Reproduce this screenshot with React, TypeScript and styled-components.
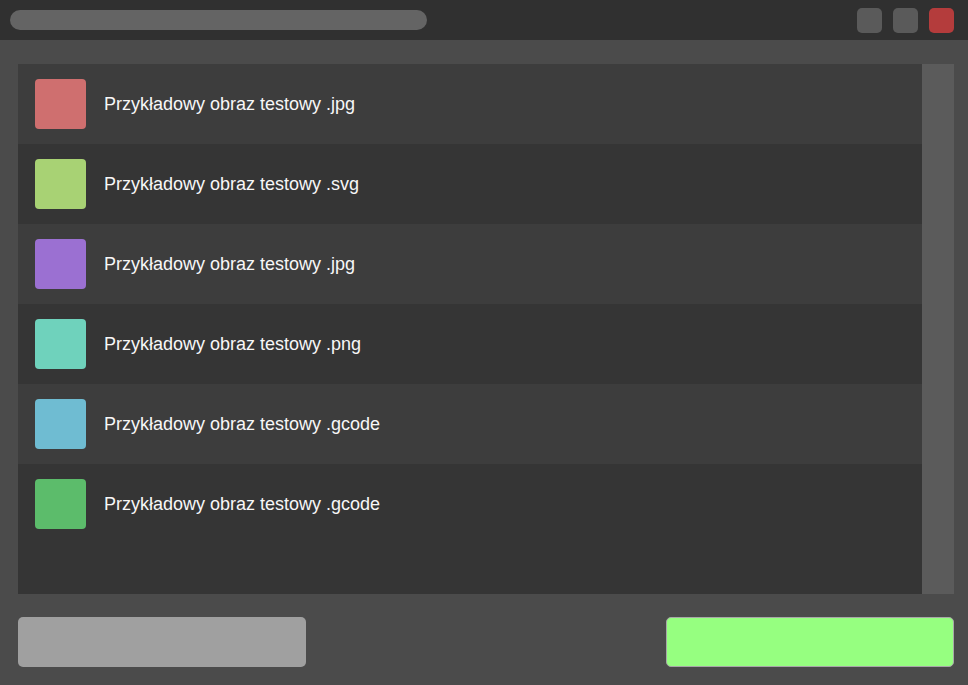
import React from "react";
import styled, { createGlobalStyle } from "styled-components";

const Global = createGlobalStyle`
  html, body { margin: 0; padding: 0; background: #4b4b4b; }
  body { font-family: "Liberation Sans", Arial, sans-serif; }
  * { box-sizing: border-box; }
`;

const Window = styled.div`
  width: 968px;
  height: 685px;
  display: flex;
  flex-direction: column;
  background: #4b4b4b;
`;

const TitleBar = styled.div`
  height: 40px;
  flex: none;
  background: #303030;
  display: flex;
  align-items: center;
  padding: 0 14px 0 10px;
`;

const TitlePill = styled.div`
  width: 417px;
  height: 20px;
  border-radius: 10px;
  background: #646464;
`;

const Controls = styled.div`
  margin-left: auto;
  display: flex;
  gap: 11px;
  margin-top: 1px;
`;

const ControlButton = styled.div<{ $close?: boolean }>`
  width: 25px;
  height: 25px;
  border-radius: 5px;
  background: ${(p) => (p.$close ? "#b43c3c" : "#5a5a5a")};
`;

const Body = styled.div`
  flex: 1;
  display: flex;
  flex-direction: column;
  padding: 24px 14px 18px 18px;
`;

const ListFrame = styled.div`
  height: 530px;
  display: flex;
`;

const List = styled.div`
  flex: 1;
  background: #353535;
  display: flex;
  flex-direction: column;
`;

const Scrollbar = styled.div`
  width: 32px;
  background: #5b5b5b;
`;

const Row = styled.div<{ $alt: boolean }>`
  height: 80px;
  flex: none;
  display: flex;
  align-items: center;
  padding-left: 17px;
  gap: 18px;
  background: ${(p) => (p.$alt ? "#3d3d3d" : "#353535")};
`;

const Swatch = styled.div<{ $color: string }>`
  width: 51px;
  height: 50px;
  border-radius: 4px;
  background: ${(p) => p.$color};
`;

const Label = styled.span`
  color: #f7f7f7;
  font-size: 18px;
  line-height: 20px;
`;

const Footer = styled.div`
  margin-top: 23px;
  display: flex;
  justify-content: space-between;
`;

const FooterButton = styled.div<{ $primary?: boolean }>`
  width: 288px;
  height: 50px;
  border-radius: 5px;
  background: ${(p) => (p.$primary ? "#96ff80" : "#a0a0a0")};
  border: ${(p) => (p.$primary ? "1px solid #a8a8a8" : "none")};
`;

const items = [
  { color: "#cf6f6f", name: "Przykładowy obraz testowy .jpg" },
  { color: "#a8d274", name: "Przykładowy obraz testowy .svg" },
  { color: "#9b70d2", name: "Przykładowy obraz testowy .jpg" },
  { color: "#6fd2bc", name: "Przykładowy obraz testowy .png" },
  { color: "#6fbcd2", name: "Przykładowy obraz testowy .gcode" },
  { color: "#5cbc6b", name: "Przykładowy obraz testowy .gcode" },
];

export default function App() {
  return (
    <>
      <Global />
      <Window>
        <TitleBar>
          <TitlePill />
          <Controls>
            <ControlButton />
            <ControlButton />
            <ControlButton $close />
          </Controls>
        </TitleBar>
        <Body>
          <ListFrame>
            <List>
              {items.map((it, i) => (
                <Row key={i} $alt={i % 2 === 0}>
                  <Swatch $color={it.color} />
                  <Label>{it.name}</Label>
                </Row>
              ))}
            </List>
            <Scrollbar />
          </ListFrame>
          <Footer>
            <FooterButton />
            <FooterButton $primary />
          </Footer>
        </Body>
      </Window>
    </>
  );
}
